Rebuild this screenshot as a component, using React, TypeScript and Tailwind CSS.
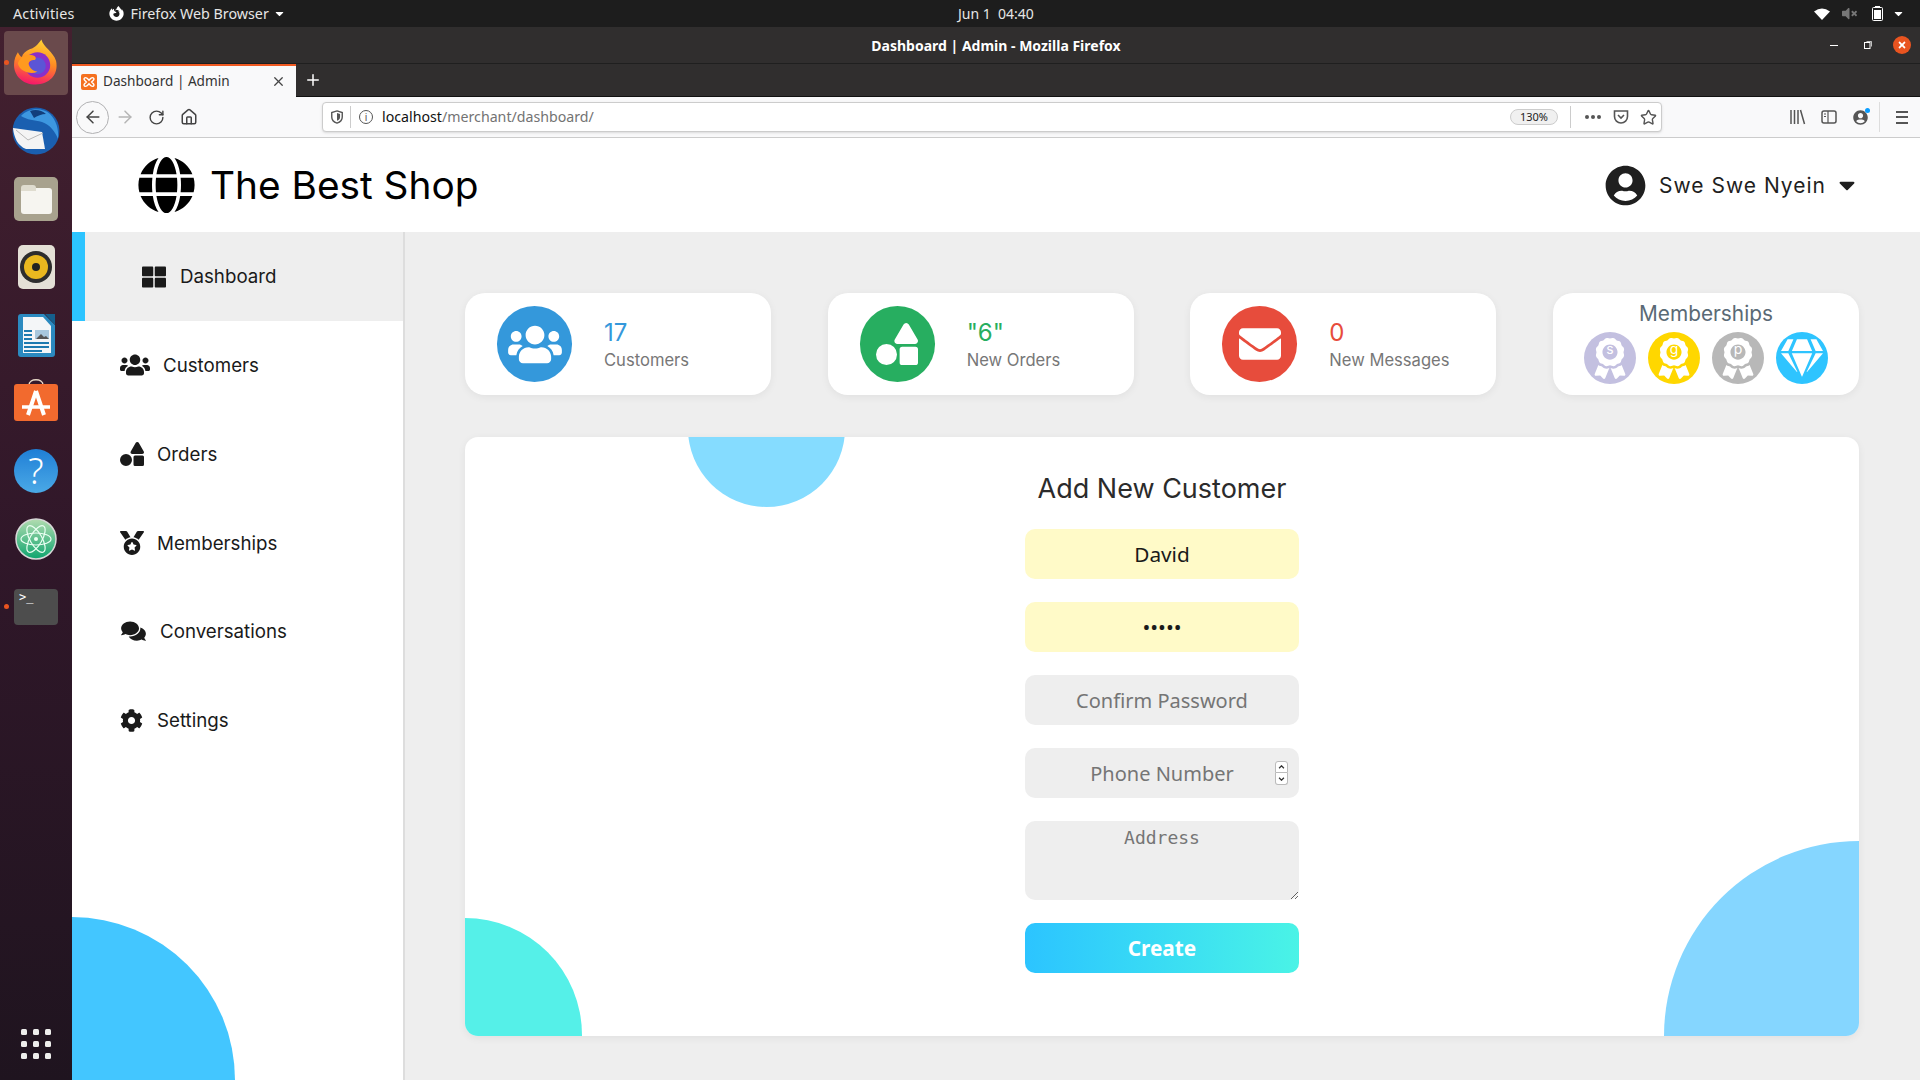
import React from 'react';
import { ArrowLeft, ArrowRight, Home, Plus, RotateCw, Star, X } from 'lucide-react';
import {
    FaAward, FaCaretDown, FaCog, FaComments, FaEnvelope, FaGem, FaGlobe, FaMedal,
    FaShapes, FaThLarge, FaUserCircle, FaUsers, FaFirefoxBrowser, FaTimes, FaVolumeMute,
} from 'react-icons/fa';

const ubuntu = "[font-family:'Noto_Sans',sans-serif]";

// dock icons
const FirefoxIcon = () => (
    <svg viewBox="0 0 46 46" className="w-[45px] h-[46px] -mt-[2px]">
        <defs>
            <linearGradient id="ffa" x1="0.6" y1="0" x2="0.4" y2="1">
                <stop offset="0" stopColor="#ffd235" />
                <stop offset="0.5" stopColor="#ff8a22" />
                <stop offset="1" stopColor="#f5156c" />
            </linearGradient>
        </defs>
        <path d="M28 0C30 8 40 12 43 22 46 36 36 46 22 46 9 46 0 37 0 26 0 20 2 16 4 13 5 15 6 17 8 18 9 14 12 12 16 10 20 9 24 6 28 0z" fill="url(#ffa)" />
        <circle cx="24" cy="26" r="13" fill="#8a2fc9" />
        <circle cx="24" cy="27" r="8.500" fill="#5b55d6" />
        <path d="M4 24C7 17 13 15 19 16 23 17 23 20 21 21 17 21 15 23 15 25 16 29 19 32 24 33 17 36 9 33 6 29 5 27 4 26 4 24z" fill="#ff9a1f" />
    </svg>
);

const ThunderbirdIcon = () => (
    <svg viewBox="0 0 48 48" className="w-[48px] h-[48px]">
        <circle cx="24" cy="24" r="23.500" fill="#1a5fb0" />
        <path d="M9 9C16 1 30 0 38 7c6 6 9 15 8 25-3-8-8-14-16-17-8-2-15-2-21-6z" fill="#3d97e0" />
        <path d="M18 4c5-2 12-1 16 3-4 0-9 2-12 4z" fill="#123f7c" />
        <path d="M1 21l29 4 3 17-19 0C6 39 2 31 1 21z" fill="#f4f4f4" />
        <path d="M4 23l12 10 15-7" fill="none" stroke="#b8b8b8" strokeWidth="1" />
    </svg>
);

const FilesIcon = () => (
    <div className="w-[44px] h-[44px] rounded-[5px] bg-[#a8a28e] flex items-center justify-center">
        <div className="relative w-[31px] h-[26px] mt-[3px] rounded-[3px] bg-[#f6f5f0]">
            <div className="absolute -top-[3px] left-0 w-[15px] h-[6px] rounded-t-[3px] bg-[#dfdccf]" />
        </div>
    </div>
);

const RhythmboxIcon = () => (
    <div className="w-[37px] h-[44px] rounded-[5px] bg-[#e4e0d6] flex items-center justify-center">
        <div className="w-[32px] h-[32px] rounded-full bg-[#2d2d2d] flex items-center justify-center">
            <div className="w-[24px] h-[24px] rounded-full bg-[#e9b81f] flex items-center justify-center">
                <div className="w-[8px] h-[8px] rounded-full bg-[#222]" />
            </div>
        </div>
    </div>
);

const WriterIcon = () => (
    <svg viewBox="0 0 37 45" className="w-[37px] h-[45px]">
        <path d="M3 1h23l11 11v29a3 3 0 0 1-3 3H3a3 3 0 0 1-3-3V4a3 3 0 0 1 3-3z" fill="#2b8ac0" />
        <path d="M5 4h20l8 9v27H5z" fill="#f4f6f8" />
        <path d="M27 1l10 0 0 11z" fill="#155f8c" />
        <path d="M6 17h8v2H6zM6 21h8v2H6zM6 25h8v2H6zM6 29h25v2H6zM6 33h25v2H6zM6 37h18v2H6z" fill="#1d7ab0" />
        <rect x="17" y="17" width="14" height="9" fill="#a8c8de" />
        <path d="M18 26l5-5 3 3 2-1 3 3z" fill="#555" />
    </svg>
);

const SoftwareIcon = () => (
    <svg viewBox="0 0 44 42" className="w-[44px] h-[42px]">
        <path d="M15 6c0-7 14-7 14 0" fill="none" stroke="#e8d9c8" strokeWidth="1.500" />
        <rect x="0" y="5" width="44" height="37" rx="3" fill="#f26a2e" />
        <path d="M22 12L14 36M22 12L30 36" stroke="#fff" strokeWidth="4" fill="none" />
        <path d="M8 28h28" stroke="#fff" strokeWidth="3.500" />
    </svg>
);

const AtomIcon = () => (
    <svg viewBox="0 0 42 42" className="w-[42px] h-[42px]">
        <defs>
            <linearGradient id="atm" x1="0" y1="0" x2="0" y2="1">
                <stop offset="0" stopColor="#b2dcb0" />
                <stop offset="1" stopColor="#0ea56e" />
            </linearGradient>
        </defs>
        <circle cx="21" cy="21" r="20" fill="url(#atm)" stroke="#d8d8d8" strokeWidth="1.500" />
        <g fill="none" stroke="#eafff2" strokeWidth="1.200">
            <ellipse cx="21" cy="21" rx="15" ry="6" />
            <ellipse cx="21" cy="21" rx="15" ry="6" transform="rotate(60 21 21)" />
            <ellipse cx="21" cy="21" rx="15" ry="6" transform="rotate(120 21 21)" />
        </g>
        <circle cx="21" cy="21" r="2" fill="#eafff2" />
    </svg>
);

const DockDot = () => <div className="absolute left-[4px] top-1/2 -mt-[3px] w-[5px] h-[5px] rounded-full bg-[#e95420]" />;

const Dock = () => (
    <div className="w-[72px] flex-none flex flex-col items-center bg-gradient-to-b from-[#43202f] via-[#301729] to-[#1f141f]">
        <div className="relative mt-[4px] w-full h-[64px] flex justify-center">
            <div className="w-[64px] h-[64px] rounded-[4px] bg-[#6a4a4c] flex items-center justify-center"><FirefoxIcon /></div>
            <DockDot />
        </div>
        <div className="mt-[3px] h-[66px] flex items-center"><ThunderbirdIcon /></div>
        <div className="mt-[2px] h-[66px] flex items-center"><FilesIcon /></div>
        <div className="mt-[1px] h-[68px] flex items-center"><RhythmboxIcon /></div>
        <div className="h-[68px] flex items-center"><WriterIcon /></div>
        <div className="h-[62px] flex items-center"><SoftwareIcon /></div>
        <div className="h-[80px] flex items-center">
            <div className={`w-[44px] h-[44px] rounded-full bg-gradient-to-b from-[#1f7fd6] to-[#4aa9e6] flex items-center justify-center text-white text-[36px] font-light ${ubuntu}`}>?</div>
        </div>
        <div className="h-[56px] flex items-center"><AtomIcon /></div>
        <div className="relative w-full h-[80px] flex items-center justify-center">
            <div className="w-[44px] h-[36px] rounded-[4px] bg-[#4d4d4d] pl-[5px] text-white text-[12px] leading-[16px] [font-family:'DejaVu_Sans_Mono',monospace]">&gt;_</div>
            <DockDot />
        </div>
        <div className="mt-auto mb-[21px] grid grid-cols-3 gap-x-[6px] gap-y-[6px]">
            {Array.from({ length: 9 }).map((_, i) => (
                <div key={i} className="w-[6px] h-[6px] rounded-[1.500px] bg-[#eeeeec]" />
            ))}
        </div>
    </div>
);

const TopBar = () => (
    <div className={`h-[27px] flex-none relative flex items-center bg-[#1d1d1d] text-[14.300px] text-[#e6e6e6] ${ubuntu}`}>
        <span className="ml-[13px] tracking-[0.2px]">Activities</span>
        <FaFirefoxBrowser className="ml-[34px] text-[15px] text-white" />
        <span className="ml-[7px]">Firefox Web Browser</span>
        <FaCaretDown className="ml-[4px] text-[13px] text-white" />
        <span className="absolute left-[958px] text-[14px] whitespace-pre">Jun 1  04:40</span>
        <div className="ml-auto flex items-center mr-[15px]">
            <svg viewBox="0 0 16 12" className="w-[16px] h-[12px]">
                <path d="M0 3.500Q8-2.500 16 3.500L8 12z" fill="#fff" />
            </svg>
            <FaVolumeMute className="ml-[12px] text-[15px] text-[#777]" />
            <svg viewBox="0 0 11 15" className="ml-[15px] w-[11px] h-[15px]">
                <rect x="0.500" y="1.500" width="10" height="13" rx="1" fill="none" stroke="#fff" />
                <rect x="2" y="4" width="7" height="9" fill="#fff" />
                <rect x="3" y="0" width="5" height="1.500" fill="#fff" />
            </svg>
            <FaCaretDown className="ml-[9px] text-[13px] text-white" />
        </div>
    </div>
);

const BrowserChrome = () => (
    <div className={`flex-none ${ubuntu}`}>
        <div className="h-[37px] relative flex items-center justify-center bg-[#302e2e] border-b border-[#1f1f1f] text-white text-[14px] font-bold">
            Dashboard | Admin - Mozilla Firefox
            <div className="absolute right-[9px] top-[9px] flex items-center">
                <div className="w-[8px] h-[1px] bg-white" />
                <svg viewBox="0 0 8 8" className="ml-[26px] w-[8px] h-[8px]">
                    <rect x="0.500" y="1.500" width="5.500" height="6" fill="none" stroke="#fff" />
                    <path d="M2.500 0.500h5v5" fill="none" stroke="#fff" strokeWidth="0.700" />
                </svg>
                <div className="ml-[21px] w-[18px] h-[18px] rounded-full bg-[#e95420] flex items-center justify-center">
                    <FaTimes className="text-[10px] text-white" />
                </div>
            </div>
        </div>
        <div className="h-[33px] flex bg-[#302e2e] border-b border-[#111]">
            <div className="w-[224px] h-[33px] flex items-center bg-[#f9f9fa] border-t-2 border-[#f15a22] pl-[9px] text-[#333] text-[13.600px]">
                <div className="w-[16px] h-[16px] rounded-[2px] bg-[#f5701f] flex items-center justify-center">
                    <svg viewBox="0 0 16 16" className="w-[14px] h-[14px]">
                        <path d="M4 3c2 0 3 2 4 3 1-1 2-3 4-3s2 2 1 3l-2 2 2 2c1 1 1 3-1 3s-3-2-4-3c-1 1-2 3-4 3s-2-2-1-3l2-2-2-2C2 5 2 3 4 3z" fill="none" stroke="#fff" strokeWidth="1.600" />
                    </svg>
                </div>
                <span className="ml-[6px]">Dashboard | Admin</span>
                <X className="ml-auto mr-[10px] w-[15px] h-[15px] text-[#444]" strokeWidth={2} />
            </div>
            <Plus className="ml-[8px] mt-[7px] w-[18px] h-[18px] text-white" strokeWidth={2} />
        </div>
        <div className="h-[41px] flex items-center bg-[#f9f9fa] border-b border-[#ccc]">
            <div className="ml-[4px] w-[33px] h-[33px] rounded-full border border-[#b1b1b3] flex items-center justify-center">
                <ArrowLeft className="w-[20px] h-[20px] text-[#444]" strokeWidth={1.800} />
            </div>
            <ArrowRight className="ml-[6px] w-[20px] h-[20px] text-[#b5b5b5]" strokeWidth={1.800} />
            <RotateCw className="ml-[13px] w-[17px] h-[17px] text-[#444]" strokeWidth={2} />
            <Home className="ml-[15px] w-[18px] h-[18px] text-[#444]" strokeWidth={2} />
            <div className="ml-[124px] w-[1340px] h-[30px] flex items-center rounded-[4px] border border-[#ccc] bg-white pr-[4px] text-[14.200px] shadow-sm">
                <svg viewBox="0 0 16 16" className="ml-[7px] w-[14px] h-[14px]">
                    <path d="M8 1l6 2v5c0 4-3 6-6 7-3-1-6-3-6-7V3z" fill="none" stroke="#555" strokeWidth="1.600" />
                    <path d="M8 3.500l3.500 1V8c0 2.500-1.800 3.700-3.500 4.400z" fill="#555" />
                </svg>
                <div className="ml-[6px] w-px h-[22px] bg-[#ccc]" />
                <div className="ml-[8px] w-[14px] h-[14px] rounded-full border border-[#555] flex items-center justify-center text-[10px] leading-none text-[#555]">i</div>
                <span className="ml-[9px] text-[#111]">localhost<span className="text-[#737373]">/merchant/dashboard/</span></span>
                <div className="ml-auto w-[48px] h-[16px] rounded-full border border-[#ccc] bg-[#f0f0f0] flex items-center justify-center text-[11px] text-[#222]">130%</div>
                <div className="ml-[12px] w-px h-[22px] bg-[#ccc]" />
                <div className="ml-[14px] flex gap-[2px]">
                    <div className="w-[4px] h-[4px] rounded-full bg-[#555]" />
                    <div className="w-[4px] h-[4px] rounded-full bg-[#555]" />
                    <div className="w-[4px] h-[4px] rounded-full bg-[#555]" />
                </div>
                <svg viewBox="0 0 16 16" className="ml-[12px] w-[16px] h-[16px]">
                    <path d="M1.500 2h13v5.500a6.500 6.500 0 0 1-13 0z" fill="none" stroke="#555" strokeWidth="1.600" />
                    <path d="M5 6l3 3 3-3" fill="none" stroke="#555" strokeWidth="1.600" />
                </svg>
                <Star className="ml-[11px] w-[17px] h-[17px] text-[#555]" strokeWidth={2} />
            </div>
            <svg viewBox="0 0 16 16" className="ml-[128px] w-[16px] h-[16px]">
                <path d="M1 1v14M4.500 1v14M8 1v14M10.500 1l4 14" stroke="#555" strokeWidth="1.500" fill="none" />
            </svg>
            <svg viewBox="0 0 16 16" className="ml-[15px] w-[16px] h-[16px]">
                <rect x="1" y="2" width="14" height="12" rx="2" fill="none" stroke="#555" strokeWidth="1.500" />
                <path d="M7 2v12M3 5h2M3 7.500h2" stroke="#555" strokeWidth="1.200" />
            </svg>
            <div className="relative ml-[16px] text-[#555]">
                <FaUserCircle className="text-[15px]" />
                <div className="absolute -right-[2px] -top-[2px] w-[5px] h-[5px] rounded-full bg-[#0a9dff]" />
            </div>
            <div className="ml-[11px] w-px h-[30px] bg-[#ddd]" />
            <div className="ml-[16px] flex flex-col gap-[3.500px]">
                <div className="w-[12px] h-[2px] bg-[#555]" />
                <div className="w-[12px] h-[2px] bg-[#555]" />
                <div className="w-[12px] h-[2px] bg-[#555]" />
            </div>
        </div>
    </div>
);

const navItems = [
    { label: 'Customers', icon: <FaUsers className="w-[30px] h-[24px]" />, gap: 'ml-[13px] mt-[2px]' },
    { label: 'Orders', icon: <FaShapes className="w-[24px] h-[24px]" />, gap: 'ml-[13px] mt-[2px]' },
    { label: 'Memberships', icon: <FaMedal className="w-[24px] h-[24px]" />, gap: 'ml-[13px] mt-[2px]' },
    { label: 'Conversations', icon: <FaComments className="w-[27px] h-[22px]" />, gap: 'ml-[13px] mt-[2px]' },
    { label: 'Settings', icon: <FaCog className="w-[23px] h-[23px]" />, gap: 'ml-[14px] mt-[2px]' },
];

const Sidebar = () => (
    <div className="relative w-[333px] flex-none bg-white border-r-2 border-[#ddd] overflow-hidden text-[18.720px] text-[#1a1a1a]">
        <div className="h-[89px] flex items-center bg-[#eee] border-l-[13px] border-[#2cc4ff] pl-[57px]">
            <FaThLarge className="w-[24px] h-[24px]" />
            <span className="ml-[14px] mt-[2px]">Dashboard</span>
        </div>
        {navItems.map((item) => (
            <div key={item.label} className="h-[88.700px] flex items-center pl-[48px]">
                {item.icon}
                <span className={item.gap}>{item.label}</span>
            </div>
        ))}
        <div className="absolute -left-[163px] top-[685px] w-[326px] h-[326px] rounded-full bg-[#43c6ff]" />
    </div>
);

const StatCard = ({ color, icon, value, label }: { color: string; icon: React.ReactNode; value: string; label: string }) => (
    <div className="w-[306px] h-[102px] rounded-[20px] bg-white shadow-[0_2px_8px_rgba(0,0,0,0.06)] flex items-center pl-[32px]">
        <div className={`w-[75px] h-[76px] rounded-full flex items-center justify-center text-white ${color}`}>{icon}</div>
        <div className="ml-[32px] mt-[1px]">
            <div className="text-[24px] leading-[29px]" style={{ color: value === '17' ? '#3498db' : value === '0' ? '#e74c3c' : '#27ae60' }}>{value}</div>
            <div className="mt-[1px] text-[16.600px] leading-[24px] text-[#777]">{label}</div>
        </div>
    </div>
);

const Badge = ({ color, letter }: { color: string; letter: string }) => (
    <div className={`relative w-[52px] h-[52px] rounded-full flex items-center justify-center text-white ${color}`}>
        <FaAward className="w-[36px] h-[41px]" />
        <span className="absolute left-0 right-0 top-[7px] text-center text-[14px] leading-[20px] text-white">{letter}</span>
    </div>
);

const fieldClass = `w-[274px] h-[50px] rounded-[10px] text-center text-[20.800px] outline-none placeholder:text-[20px] placeholder:text-[#757575] text-[#1a1a1a] ${ubuntu}`;

const AddCustomerForm = () => (
    <div className="relative mt-[42px] h-[599px] rounded-[13px] bg-white shadow-[0_2px_8px_rgba(0,0,0,0.06)] overflow-hidden flex flex-col items-center">
        <div className="absolute left-[223px] -top-[90px] w-[157px] h-[160px] rounded-full bg-[#85dcff]" />
        <div className="absolute -left-[117px] top-[481px] w-[234px] h-[234px] rounded-full bg-[#55f0e8]" />
        <div className="absolute -right-[195px] top-[404px] w-[390px] h-[390px] rounded-full bg-[#85d6ff]" />

        <h2 className="relative mt-[33px] text-[27px] leading-[38px] font-normal text-[#2b2b2b]">Add New Customer</h2>
        <form className="relative mt-[21px] flex flex-col gap-[23px]">
            <input className={`${fieldClass} bg-[#fffac8]`} defaultValue="David" />
            <input className={`${fieldClass} bg-[#fffac8]`} type="password" defaultValue="12345" />
            <input className={`${fieldClass} bg-[#eee]`} placeholder="Confirm Password" />
            <div className="relative">
                <input className={`${fieldClass} bg-[#eee]`} placeholder="Phone Number" />
                <div className="absolute right-[11px] top-[13px] flex flex-col">
                    <div className="w-[13px] h-[12px] rounded-t-[3px] border border-[#bbb] bg-white flex items-center justify-center">
                        <svg viewBox="0 0 8 5" className="w-[7px] h-[4px]"><path d="M1 4l3-3 3 3" fill="none" stroke="#333" strokeWidth="1.600" /></svg>
                    </div>
                    <div className="w-[13px] h-[12px] rounded-b-[3px] border border-t-0 border-[#bbb] bg-white flex items-center justify-center">
                        <svg viewBox="0 0 8 5" className="w-[7px] h-[4px]"><path d="M1 1l3 3 3-3" fill="none" stroke="#333" strokeWidth="1.600" /></svg>
                    </div>
                </div>
            </div>
            <textarea className="w-[274px] h-[79px] block rounded-[10px] bg-[#eee] pt-[4px] text-center text-[18px] leading-[26px] outline-none placeholder:text-[#757575] [font-family:'DejaVu_Sans_Mono',monospace]" placeholder="Address" />
            <button type="button" className={`w-[274px] h-[50px] pt-[2px] rounded-[10px] bg-gradient-to-r from-[#2cc4ff] to-[#4af3e6] text-white text-[20.800px] font-bold ${ubuntu}`}>Create</button>
        </form>
    </div>
);

export default function App() {
    return (
        <div className="w-[1920px] h-[1080px] flex flex-col overflow-hidden bg-[#eee] [font-family:Inter,sans-serif]">
            <TopBar />
            <div className="flex-1 flex min-h-0">
                <Dock />
                <div className="flex-1 flex flex-col min-w-0">
                    <BrowserChrome />
                    <div className="h-[94px] flex-none flex items-center bg-white">
                        <FaGlobe className="ml-[65px] w-[59px] h-[58px] text-black" />
                        <span className="ml-[14px] text-[38.800px] text-black">The Best Shop</span>
                        <FaUserCircle className="ml-auto w-[41px] h-[41px] text-[#1f1f1f]" />
                        <span className="ml-[13px] mt-[2px] text-[21px] tracking-[1px] text-[#1f1f1f]">Swe Swe Nyein</span>
                        <FaCaretDown className="ml-[13px] mr-[65px] w-[16px] h-[26px] text-[#1f1f1f]" />
                    </div>
                    <div className="flex-1 flex min-h-0">
                        <Sidebar />
                        <main className="flex-1 pl-[60px] pr-[61px] pt-[61px]">
                            <div className="flex justify-between">
                                <StatCard color="bg-[#3498db]" icon={<FaUsers className="w-[54px] h-[43px]" />} value="17" label="Customers" />
                                <StatCard color="bg-[#27ae60]" icon={<FaShapes className="w-[42px] h-[42px]" />} value={'"6"'} label="New Orders" />
                                <StatCard color="bg-[#e74c3c]" icon={<FaEnvelope className="w-[42px] h-[42px]" />} value="0" label="New Messages" />
                                <div className="w-[306px] h-[102px] rounded-[20px] bg-white shadow-[0_2px_8px_rgba(0,0,0,0.06)] flex flex-col items-center">
                                    <div className="mt-[8px] text-[20.800px] leading-[25px] text-[#5a6a75]">Memberships</div>
                                    <div className="mt-[6px] flex gap-[12px]">
                                        <Badge color="bg-[#c3c0e0]" letter="s" />
                                        <Badge color="bg-[#ffd700]" letter="g" />
                                        <Badge color="bg-[#b8b8b8]" letter="p" />
                                        <div className="w-[52px] h-[52px] rounded-full bg-[#2ec4ff] flex items-center justify-center text-white">
                                            <FaGem className="w-[42px] h-[38px]" />
                                        </div>
                                    </div>
                                </div>
                            </div>
                            <AddCustomerForm />
                        </main>
                    </div>
                </div>
            </div>
        </div>
    );
}
